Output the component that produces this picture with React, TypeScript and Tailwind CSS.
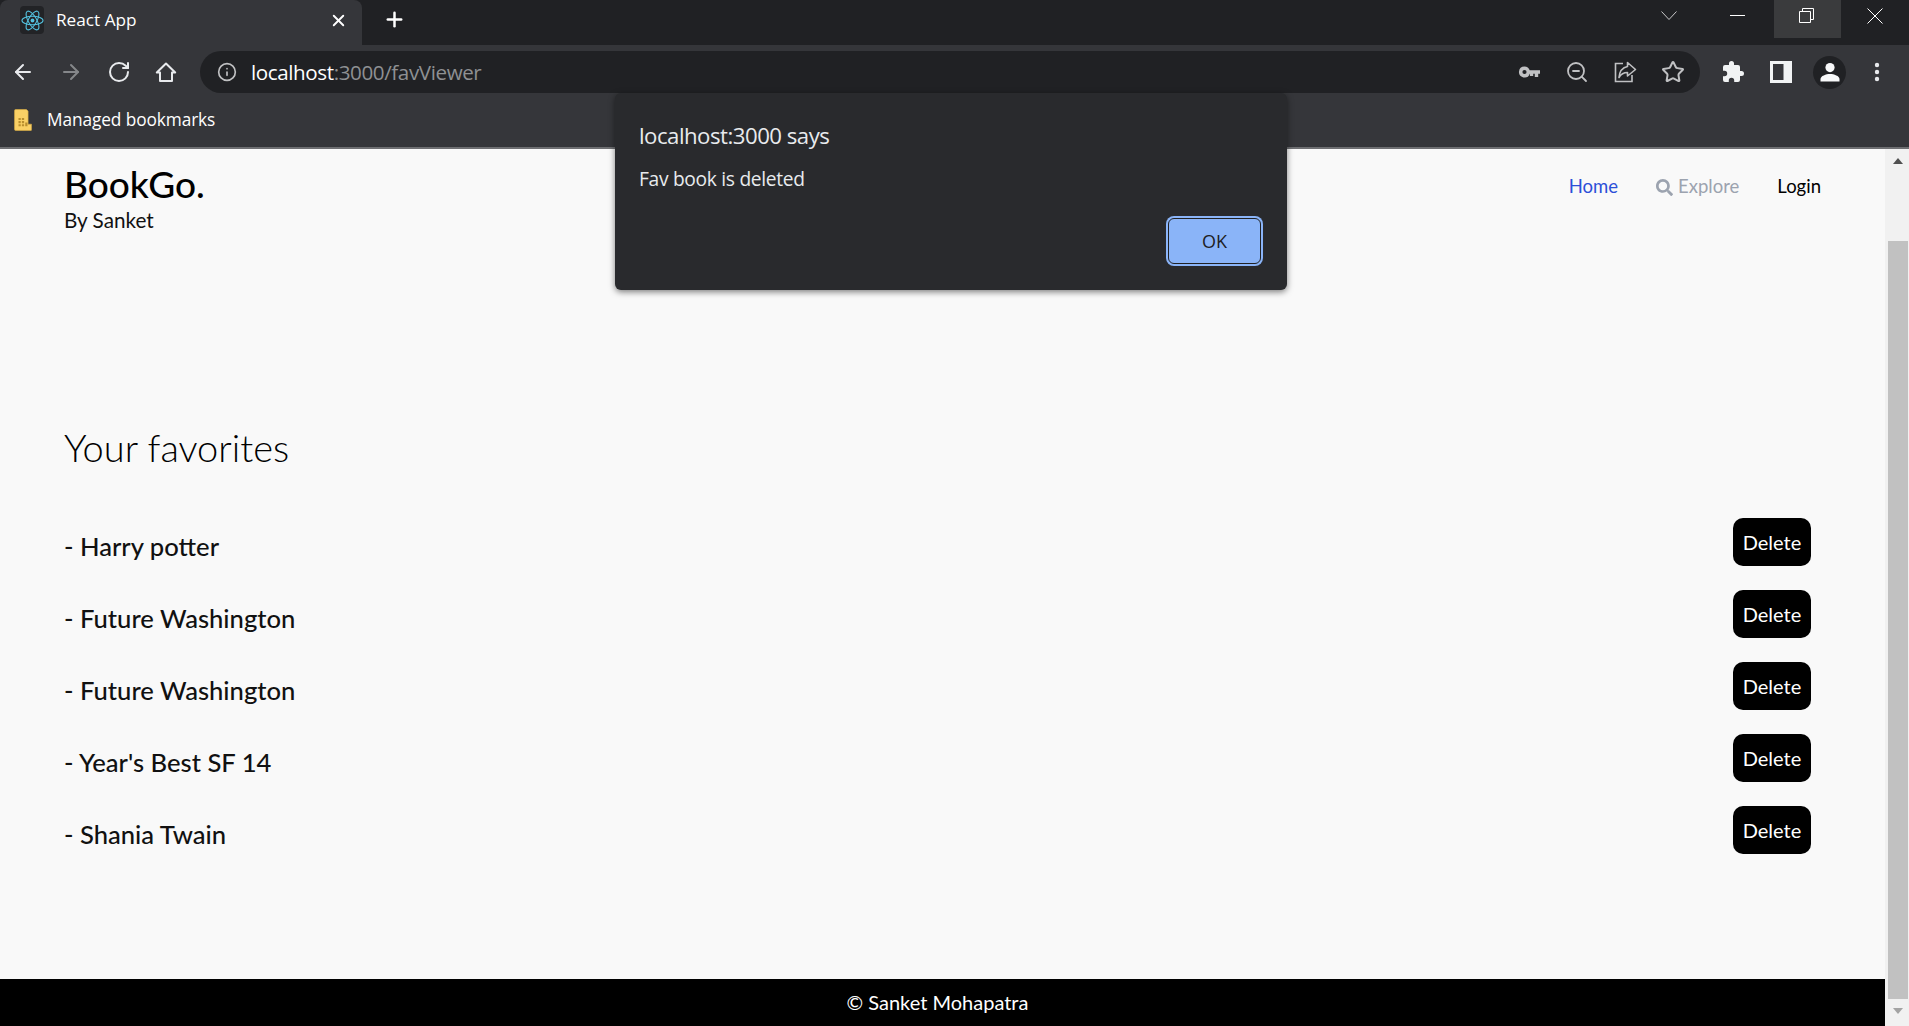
import { ArrowLeft, ArrowRight, Info, RotateCw, Star, X, Plus, ZoomOut } from "lucide-react";
import { FaSearch } from "react-icons/fa";

const favorites = ["Harry potter", "Future Washington", "Future Washington", "Year's Best SF 14", "Shania Twain"];

const ReactLogo = () => (
  <svg viewBox="0 0 24 24" className="w-[23px] h-[23px]" fill="none" stroke="#53c1de" strokeWidth="1.1">
    <circle cx="12" cy="12" r="2" fill="#53c1de" stroke="none" />
    <ellipse cx="12" cy="12" rx="11" ry="4.4" />
    <ellipse cx="12" cy="12" rx="11" ry="4.4" transform="rotate(60 12 12)" />
    <ellipse cx="12" cy="12" rx="11" ry="4.4" transform="rotate(120 12 12)" />
  </svg>
);

const HomeIcon = () => (
  <svg viewBox="0 0 24 24" className="w-[24px] h-[24px]" fill="none" stroke="#e8eaed" strokeWidth="2">
    <path d="M12 3.5 2.8 12.5H6V21H18V12.5H21.2z" strokeLinejoin="round" />
  </svg>
);

const KeyIcon = () => (
  <svg viewBox="0 0 24 24" className="w-[24px] h-[24px]" fill="#c0c1c3">
    <path fillRule="evenodd" d="M7.5 6.5a5.5 5.5 0 0 1 5.2 3.8H23v3.4h-1.8V17h-3.4v-3.3h-1.6V16h-3.3v-2.3h-.2a5.5 5.5 0 1 1-5.2-7.2zm0 3.4a2.1 2.1 0 1 0 0 4.2 2.1 2.1 0 0 0 0-4.2z" />
  </svg>
);

const ShareIcon = () => (
  <svg viewBox="0 0 24 24" className="w-[24px] h-[24px]" fill="none" stroke="#c0c1c3" strokeWidth="1.6">
    <path d="M10 3.5H2.5V21.5H19V15" />
    <path d="M14.5 2.5 22.5 9.5 14.5 16V12.5C10.5 12.5 8 14 6 17.5 6.5 12 9.5 7.5 14.5 6.5z" strokeLinejoin="round" />
  </svg>
);

const PuzzleIcon = () => (
  <svg viewBox="0 0 24 24" className="w-[24px] h-[24px]" fill="#f1f3f4">
    <path d="M20.5 11H19V7a2 2 0 0 0-2-2h-4V3.5a2.5 2.5 0 0 0-5 0V5H4a2 2 0 0 0-2 2v3.8h1.5a2.7 2.7 0 0 1 0 5.4H2V20a2 2 0 0 0 2 2h3.8v-1.5a2.7 2.7 0 0 1 5.4 0V22H17a2 2 0 0 0 2-2v-4h1.5a2.5 2.5 0 0 0 0-5z" />
  </svg>
);

const PanelIcon = () => (
  <svg viewBox="0 0 22 22" className="w-[22px] h-[22px]">
    <rect x="0" y="0" width="22" height="22" fill="#f1f3f4" />
    <rect x="3" y="3" width="10.5" height="16" fill="#35363a" />
  </svg>
);

const AvatarIcon = () => (
  <div className="w-[33px] h-[33px] rounded-full bg-[#202124] flex items-center justify-center">
    <svg viewBox="0 0 20 20" className="w-[20px] h-[20px]" fill="#f8f9fa">
      <circle cx="10" cy="5.6" r="4.6" />
      <path d="M0.5 19.5v-2.6c0-3 5.5-5 9.5-5s9.5 2 9.5 5v2.6z" />
    </svg>
  </div>
);

const DotsIcon = () => (
  <svg viewBox="0 0 6 20" className="w-[6px] h-[20px]" fill="#e8eaed">
    <circle cx="3" cy="3" r="2.2" />
    <circle cx="3" cy="10" r="2.2" />
    <circle cx="3" cy="17" r="2.2" />
  </svg>
);

const FolderIcon = () => (
  <svg viewBox="0 0 16 21" className="w-[18px] h-[22px]" preserveAspectRatio="none">
    <path d="M0.5 1.5A1 1 0 0 1 1.5 .5H11l1.5 1.5v12.5h3V20a.5.5 0 0 1-.5.5H1.5a1 1 0 0 1-1-1z" fill="#fad165" stroke="#d9ad45" strokeWidth="0.6" />
    <path d="M4 8.5h2v2H4zM7 8.5h2v2H7zM4 11.5h2v2H4zM7 11.5h2v2H7zM4 14.5h2v2H4zM7 14.5h2v2H7zM10 13h2v3.5h-2z" fill="#b98f2e" />
  </svg>
);

const ChromeBar = () => (
  <div className="h-[149px] shrink-0 flex flex-col font-['Open_Sans','Noto_Sans',sans-serif]">
    <div className="h-[45px] bg-[#202124] flex">
      <div className="w-[362px] h-full bg-[#35363a] rounded-t-lg flex items-center pl-[20px] pr-[14px]">
        <div className="w-[24px] h-[28px] mb-[5px] bg-[#222326] rounded-sm flex items-center justify-center shrink-0">
          <ReactLogo />
        </div>
        <span className="ml-[12px] mb-[5px] text-[17.2px] text-white">React App</span>
        <X className="ml-auto mb-[5px] text-white" size={19} strokeWidth={2.4} />
      </div>
      <Plus className="ml-[21px] mt-[8px] text-white" size={23} strokeWidth={2.6} />
      <div className="ml-auto flex items-start text-white">
        <svg viewBox="0 0 16 9" className="w-[16px] h-[9px] mt-[11px] mr-[53px]" fill="none" stroke="#c8c9ca" strokeWidth="1">
          <path d="M.5.5 8 8.5 15.5.5" />
        </svg>
        <div className="w-[15px] h-px bg-white mt-[15px] mr-[29px]" />
        <div className="w-[67px] h-[38px] bg-[#3a3b3d] flex items-center justify-center">
          <svg viewBox="0 0 15 15" className="w-[15px] h-[15px] mb-[8px] mr-[2px]" fill="none" stroke="#fff" strokeWidth="1">
            <path d="M.5 3.5h11v11H.5zM3.5 3.5V.5h11v11h-3" />
          </svg>
        </div>
        <svg viewBox="0 0 16 16" className="w-[16px] h-[16px] mt-[8px] ml-[26px] mr-[26px]" fill="none" stroke="#fff" strokeWidth="1">
          <path d="M.5.5l15 15M15.5.5l-15 15" />
        </svg>
      </div>
    </div>

    <div className="h-[49px] bg-[#35363a] flex items-start pt-[6px]">
      <div className="w-[200px] h-[42px] flex items-center pl-[11px] gap-[24px] shrink-0">
        <ArrowLeft className="text-[#e8eaed]" size={24} strokeWidth={2} />
        <ArrowRight className="text-[#85878a]" size={24} strokeWidth={2} />
        <RotateCw className="text-[#e8eaed]" size={24} strokeWidth={2} />
        <div className="-ml-[1px]"><HomeIcon /></div>
      </div>
      <div className="w-[1500px] h-[42px] bg-[#202124] rounded-full flex items-center pl-[17px] pr-[15px]">
        <Info className="text-[#c0c1c3]" size={20} strokeWidth={2} />
        <div className="ml-[14px] text-[20.6px] tracking-[-0.4px]">
          <span className="text-white">localhost</span>
          <span className="text-[#8e9093]">:3000/favViewer</span>
        </div>
        <div className="ml-auto flex items-center gap-[24px]">
          <KeyIcon />
          <ZoomOut className="text-[#c0c1c3]" size={24} strokeWidth={1.8} />
          <ShareIcon />
          <Star className="text-[#c0c1c3]" size={24} strokeWidth={2} />
        </div>
      </div>
      <div className="flex items-center h-[42px] ml-[21px]">
        <PuzzleIcon />
        <div className="ml-[25px]"><PanelIcon /></div>
        <div className="ml-[21px]"><AvatarIcon /></div>
        <div className="ml-[28px]"><DotsIcon /></div>
      </div>
    </div>

    <div className="h-[55px] bg-[#35363a] border-b-2 border-[#6e6f72] flex items-center pl-[14px] pb-[2px]">
      <FolderIcon />
      <span className="ml-[15px] text-[17.3px] text-white tracking-[-0.1px]">Managed bookmarks</span>
    </div>
  </div>
);

const AlertDialog = () => (
  <div className="absolute left-[615px] top-[93px] w-[672px] h-[197px] bg-[#292a2d] rounded-md shadow-[0_2px_6px_rgba(0,0,0,0.5)] pl-[24px] pr-[24px] pt-[27px] font-['Open_Sans','Noto_Sans',sans-serif] text-[#e8eaed]">
    <div className="text-[22.2px] leading-[32px] tracking-[-0.5px]">localhost:3000 says</div>
    <div className="mt-[15px] text-[19.2px] leading-[24px] tracking-[-0.3px]">Fav book is deleted</div>
    <div className="flex justify-end mt-[25px]">
      <div className="w-[97px] h-[50px] p-[2px] rounded-lg bg-[#8ab4f8]">
        <button className="w-full h-full rounded-md bg-[#8ab4f8] border-[1.5px] border-[#202124] text-[18px] text-[#202124]">
          OK
        </button>
      </div>
    </div>
  </div>
);

const Scrollbar = () => (
  <div className="w-[24px] shrink-0 bg-[#f1f1f1] flex flex-col items-center pl-[2px]">
    <div className="h-[92px] w-full flex items-start justify-center pt-[9px]">
      <div className="w-0 h-0 border-x-[5px] border-x-transparent border-b-[6px] border-b-[#505050]" />
    </div>
    <div className="w-[20px] flex-1 bg-[#c1c1c1]" />
    <div className="h-[27px] w-full flex items-start justify-center pt-[9px]">
      <div className="w-0 h-0 border-x-[5px] border-x-transparent border-t-[6px] border-t-[#a3a3a3]" />
    </div>
  </div>
);

export default function App() {
  return (
    <div className="relative h-[1026px] overflow-hidden flex flex-col">
      <ChromeBar />
      <div className="flex-1 flex min-h-0 font-['Lato','Noto_Sans',sans-serif]">
        <div className="flex-1 flex flex-col bg-[#f9f9f9]">
          <header className="flex justify-between pl-[64px] pr-[64px] pt-[14px]">
            <div>
              <div className="text-[37px] leading-[42px] font-medium text-black">BookGo.</div>
              <div className="text-[20.7px] leading-[28px] text-[#111] mt-[1px]">By Sanket</div>
            </div>
            <nav className="flex items-center gap-[38px] h-[48px] text-[18.5px]">
              <a className="text-[#2b4fd8]">Home</a>
              <a className="flex items-center gap-[5px] text-[#9ca3af]">
                <FaSearch size={17} />
                Explore
              </a>
              <a className="text-black">Login</a>
            </nav>
          </header>

          <main className="flex-1 pl-[64px] pr-[74px]">
            <h1 className="mt-[189px] text-[38px] leading-[48px] font-light text-black">Your favorites</h1>
            <ul className="mt-[47px] flex flex-col gap-[24px]">
              {favorites.map((name, i) => (
                <li key={i} className="flex justify-between h-[48px]">
                  <span className="mt-[4px] text-[25.6px] leading-[48px] font-medium text-[#111]">- {name}</span>
                  <button className="w-[78px] h-[48px] rounded-[10px] bg-black text-white text-[20px]">Delete</button>
                </li>
              ))}
            </ul>
          </main>

          <footer className="h-[47px] bg-black text-white text-[20px] flex items-center justify-center pr-[10px] pb-[2px]">
            © Sanket Mohapatra
          </footer>
        </div>
        <Scrollbar />
      </div>
      <AlertDialog />
    </div>
  );
}
